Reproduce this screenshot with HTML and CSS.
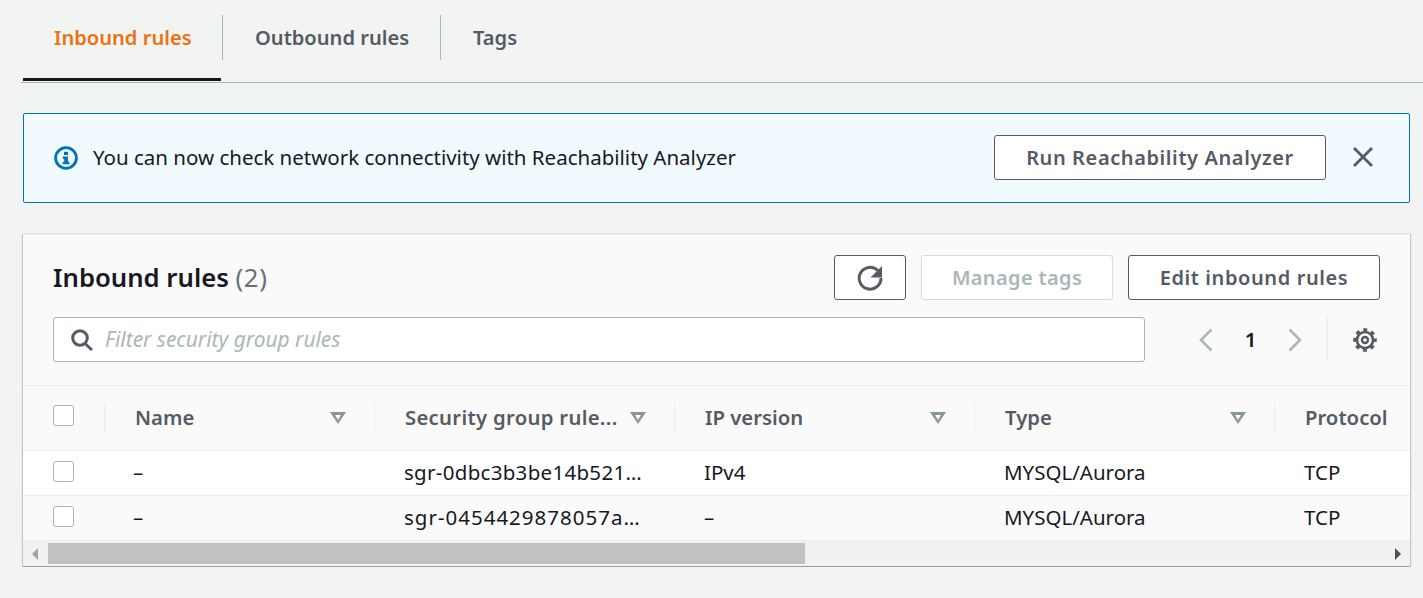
FILE: index.html
```html
<!DOCTYPE html>
<html lang="en">
    <head>
        <meta charset="UTF-8" />
        <title>Security group rules</title>
        <link rel="stylesheet" href="styles.css">
    </head>
    <body>
        <div class="tabs">
            <a class="tab tab-active">Inbound rules</a>
            <a class="tab tab-outbound">Outbound rules</a>
            <a class="tab tab-tags">Tags</a>
        </div>

        <div class="alert">
            <svg class="alert-icon" viewBox="0 0 24 24" width="24" height="24">
                <circle cx="12" cy="12" r="10.400" fill="none" stroke="#0073bb" stroke-width="2.800"/>
                <rect x="10" y="5.800" width="4" height="3.200" fill="#0073bb"/>
                <path d="M8.800 10.600h5.200v5.200h1.400v2.400H8.600v-2.400h1.600v-2.900H8.800z" fill="#0073bb"/>
            </svg>
            <span class="alert-text">You can now check network connectivity with Reachability Analyzer</span>
            <button class="btn btn-run">Run Reachability Analyzer</button>
            <svg class="alert-close" viewBox="0 0 24 24" width="24" height="24">
                <path d="M3 3l18 18M21 3L3 21" fill="none" stroke="#545b64" stroke-width="2.800"/>
            </svg>
        </div>

        <div class="card">
            <div class="card-head">
                <div class="title-row">
                    <h2 class="card-title">Inbound rules <span class="count">(2)</span></h2>
                    <div class="actions">
                        <button class="btn btn-refresh">
                            <svg viewBox="0 0 28 28" width="28" height="28">
                                <path d="M21.800 6.500A10.900 10.900 0 1 0 25 14" fill="none" stroke="#545b64" stroke-width="3"/>
                                <path d="M26 2v11.500H14.500z" fill="#545b64"/>
                            </svg>
                        </button>
                        <button class="btn btn-disabled">Manage tags</button>
                        <button class="btn btn-edit">Edit inbound rules</button>
                    </div>
                </div>
                <div class="filter-row">
                    <div class="search">
                        <svg viewBox="0 0 24 22" width="24" height="22">
                            <circle cx="10" cy="9" r="7.300" fill="none" stroke="#545b64" stroke-width="3"/>
                            <path d="M15 14.500l7 6.500" fill="none" stroke="#545b64" stroke-width="3"/>
                        </svg>
                        <span class="placeholder">Filter security group rules</span>
                    </div>
                    <div class="pager">
                        <svg viewBox="0 0 14 24" width="14" height="24"><path d="M12.500 1.500L2 12l10.500 10.500" fill="none" stroke="#aab7b8" stroke-width="2.600"/></svg>
                        <span class="page-num">1</span>
                        <svg viewBox="0 0 14 24" width="14" height="24"><path d="M1.500 1.500L12 12 1.500 22.500" fill="none" stroke="#aab7b8" stroke-width="2.600"/></svg>
                    </div>
                    <div class="settings">
                        <svg viewBox="0 0 24 24" width="24" height="24">
                            <circle cx="12" cy="12" r="10" fill="none" stroke="#545b64" stroke-width="3.600" stroke-dasharray="3.850 4" stroke-dashoffset="1.930"/>
                            <circle cx="12" cy="12" r="8" fill="none" stroke="#545b64" stroke-width="2.600"/>
                            <circle cx="12" cy="12" r="3" fill="none" stroke="#545b64" stroke-width="2.400"/>
                        </svg>
                    </div>
                </div>
            </div>

            <div class="row row-head">
                <div class="cell cell-check"><span class="check"></span></div>
                <div class="cell cell-name">Name<i class="sort"></i></div>
                <div class="cell cell-rule">Security group rule...<i class="sort"></i></div>
                <div class="cell cell-ip">IP version<i class="sort"></i></div>
                <div class="cell cell-type">Type<i class="sort"></i></div>
                <div class="cell cell-proto">Protocol</div>
            </div>
            <div class="row row-white">
                <div class="cell cell-check"><span class="check"></span></div>
                <div class="cell cell-name">–</div>
                <div class="cell cell-rule">sgr-0dbc3b3be14b521…</div>
                <div class="cell cell-ip">IPv4</div>
                <div class="cell cell-type">MYSQL/Aurora</div>
                <div class="cell cell-proto">TCP</div>
            </div>
            <div class="row">
                <div class="cell cell-check"><span class="check"></span></div>
                <div class="cell cell-name">–</div>
                <div class="cell cell-rule cell-rule-wide">sgr-0454429878057a…</div>
                <div class="cell cell-ip">–</div>
                <div class="cell cell-type">MYSQL/Aurora</div>
                <div class="cell cell-proto">TCP</div>
            </div>

            <div class="scrollbar">
                <i class="arrow arrow-left"></i>
                <div class="track"><div class="thumb"></div></div>
                <i class="arrow arrow-right"></i>
            </div>
        </div>
    </body>
</html>
```

FILE: styles.css
```css
* {
    box-sizing: border-box;
}

body {
    font-family: "Noto Sans", sans-serif;
    font-size: 20.5px;
    margin: 0;
    padding: 0 13px 0 23px;
    color: #16191f;
    background-color: #f2f3f3;
    overflow: hidden;
}

button {
    font-family: inherit;
}

/* tabs */
.tabs {
    display: flex;
    height: 83px;
    margin: 0 -13px 30px -2px;
    padding: 15px 0 0 2px;
    border-bottom: 1px solid #aab7b8;
}

.tab {
    height: 45px;
    font-size: 20.1px;
    font-weight: 600;
    line-height: 45px;
    color: #545b64;
    padding: 0 0 0 32px;
    border-right: 1px solid #aab7b8;
    white-space: nowrap;
}

.tab-active {
    position: relative;
    color: #ec7211;
    padding-left: 31px;
    width: 200px;
}

.tab-active::after {
    content: "";
    position: absolute;
    left: 0;
    top: 63px;
    width: 198px;
    height: 3px;
    background-color: #16191f;
}

.tab-outbound {
    width: 218px;
}

.tab-tags {
    border-right: 0;
}

/* alert */
.alert {
    display: flex;
    align-items: center;
    height: 90px;
    padding: 0 34px 2px 30px;
    border: 1px solid #0073bb;
    border-radius: 2px;
    background-color: #f1faff;
}

.alert-icon {
    flex: none;
    margin-top: 2px;
}

.alert-text {
    flex: 1;
    margin-left: 15px;
}

.alert-close {
    margin-left: 25px;
}

.btn {
    height: 45px;
    font-size: 20px;
    font-weight: 600;
    letter-spacing: 0.6px;
    color: #545b64;
    background-color: white;
    border: 1px solid #545b64;
    border-radius: 3px;
    padding: 0;
}

.btn-run {
    width: 332px;
}

/* card */
.card {
    margin-top: 31px;
    height: 333px;
    background-color: #fafafa;
    border-top: 1px solid #eaeded;
    border-bottom: 1px solid #95a1a6;
    box-shadow: 1px 0 1px 0 rgba(0, 28, 36, 0.2), -1px 0 1px 0 rgba(0, 28, 36, 0.2);
    overflow: hidden;
}

.card-head {
    height: 151px;
    padding: 20px 30px 0 30px;
    border-bottom: 1px solid #eaeded;
}

.title-row {
    display: flex;
    align-items: center;
    justify-content: space-between;
    height: 45px;
}

.card-title {
    margin: 0 0 1px;
    font-size: 25.7px;
    font-weight: 600;
}

.count {
    font-weight: 400;
    letter-spacing: 0.6px;
    color: #687078;
}

.actions {
    display: flex;
    gap: 15px;
}

.btn-refresh {
    width: 72px;
    display: flex;
    align-items: center;
    justify-content: center;
}

.btn-disabled {
    width: 192px;
    letter-spacing: 0.35px;
    color: #aab7b8;
    border-color: #d5dbdb;
}

.btn-edit {
    width: 252px;
}

.filter-row {
    display: flex;
    align-items: center;
    height: 45px;
    margin-top: 17px;
}

.search {
    display: flex;
    align-items: center;
    gap: 11px;
    width: 1092px;
    height: 45px;
    padding-left: 16px;
    background-color: white;
    border: 1px solid #aab7b8;
    border-radius: 3px;
}

.placeholder {
    font-size: 20.9px;
    font-style: italic;
    color: #aab7b8;
    margin-bottom: 1px;
}

.pager {
    display: flex;
    align-items: center;
    margin-left: 54px;
    width: 128px;
    gap: 31px;
}

.page-num {
    width: 13px;
    margin-bottom: 2px;
    font-weight: 600;
    text-align: center;
}

.settings {
    display: flex;
    align-items: center;
    height: 45px;
    padding-left: 25px;
    border-left: 1px solid #eaeded;
}

/* table */
.row {
    display: flex;
    align-items: center;
    height: 45px;
    padding-bottom: 2px;
    border-bottom: 1px solid #eaeded;
    white-space: nowrap;
}

.row-head {
    height: 65px;
    padding-bottom: 0;
    font-size: 20.3px;
    font-weight: 600;
    color: #545b64;
}

.row-white {
    background-color: white;
}

.cell {
    flex: none;
    position: relative;
    width: 300px;
    padding-left: 30px;
}

.row-head .cell {
    padding-left: 30px;
    height: 30px;
    line-height: 28px;
    border-left: 1px solid #eaeded;
}

.row-head .cell-check {
    padding-left: 30px;
    border-left: 0;
}

.cell-check {
    display: flex;
    align-items: center;
    width: 81px;
    padding-left: 30px;
}

.cell-name {
    width: 270px;
    padding-left: 29px;
}

.cell-rule {
    letter-spacing: 0.3px;
}

.cell-rule-wide {
    letter-spacing: 1px;
}

.check {
    width: 21px;
    height: 21px;
    margin-top: -1px;
    background-color: white;
    border: 1px solid #aab7b8;
    border-radius: 3px;
}

.row-head .check {
    margin-top: -6px;
}

.sort {
    position: absolute;
    right: 28px;
    top: 9px;
    width: 0;
    height: 0;
    border-left: 8px solid transparent;
    border-right: 8px solid transparent;
    border-top: 12px solid #879596;
}

.sort::after {
    content: "";
    position: absolute;
    left: -3.5px;
    top: -9.5px;
    width: 0;
    height: 0;
    border-left: 3.5px solid transparent;
    border-right: 3.5px solid transparent;
    border-top: 5px solid #fafafa;
}

/* scrollbar */
.scrollbar {
    display: flex;
    align-items: center;
    height: 25px;
    background-color: #f1f1f1;
}

.track {
    flex: 1;
    height: 21px;
    padding: 0;
    margin: 0 3px 0 0;
}

.thumb {
    margin-left: 0;
    width: 757px;
    height: 21px;
    background-color: #c1c1c1;
}

.arrow {
    flex: none;
    width: 0;
    height: 0;
    border-top: 6px solid transparent;
    border-bottom: 6px solid transparent;
}

.arrow-left {
    margin: 0 10px 0 9px;
    border-right: 6px solid #a3a3a3;
}

.arrow-right {
    margin: 0 9px 0 0;
    border-left: 6px solid #505050;
}
```
